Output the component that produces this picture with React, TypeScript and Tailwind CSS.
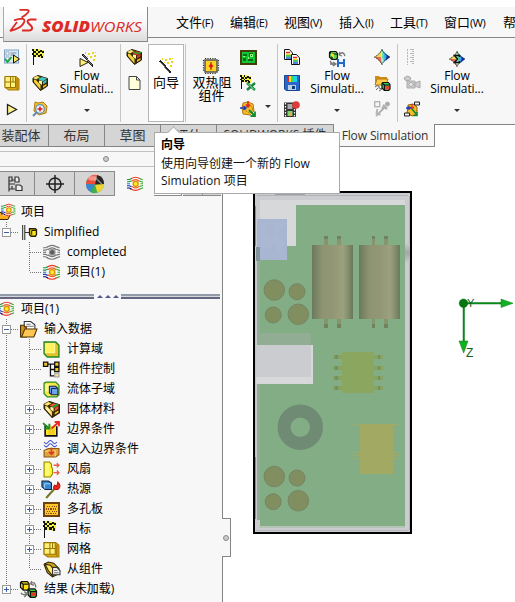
import React from "react";

const FONT = "font-['Open_Sans','Noto_Sans_CJK_SC',sans-serif]";

type IconName =
  | "list" | "mesh" | "play" | "flag" | "brick" | "search" | "wandPlay" | "burger" | "doc" | "wand"
  | "chip" | "pcb" | "excel" | "gear" | "copy" | "save" | "film" | "load" | "diamond" | "folderCube"
  | "probe" | "ruler" | "camera" | "rotate" | "sigma" | "eye" | "eyeGray" | "eyeFolder" | "config"
  | "folder" | "cube" | "tree" | "sub" | "solid" | "boundary" | "transfer" | "fan" | "heat" | "porous"
  | "part" | "results" | "treeTab" | "target" | "ball";

function Eye({ gray = false }: { gray?: boolean }) {
  const pick = (c: string) => (gray ? "#777" : c);
  return (
    <g fill="none" strokeWidth="1.100">
      <path d="M4 2.800Q8.800-.3 13 2.800M3.500 12.700Q8.800 16 13 12.700" stroke={pick("#ee3423")} />
      <path d="M4.500 5.400Q8.800 1.700 12.500 5.400M4.500 10.100Q8.800 13.700 12.500 10.100" stroke={pick("#ee5a23")} />
      <path d="M0 3.500h2.500l2-1M0 5.800h2.500l2-1" stroke={pick("#189a3a")} />
      <path d="M0 7.800h3" stroke={pick("#1d8fd0")} />
      <path d="M0 9.800h2.500l2 1" stroke={pick("#1a35c8")} />
      <path d="M0 12h2.500l2 1.200" stroke={pick("#101070")} />
      <path d="M12.700 2.500l3 1.300M12.500 5l3.500 1.200M13.500 7.800h2.500M12.500 10.500l3.500-1M12.700 13.200l3.300-1.500" stroke={pick("#35ad32")} />
      <circle cx="8.700" cy="7.800" r="2.500" fill={gray ? "#5c5c5c" : "#fff020"} stroke={gray ? "#8d8d8d" : "#d98f12"} strokeWidth="1.300" />
    </g>
  );
}

function Flag({ s = 1 }: { s?: number }) {
  const dark: [number, number][] = [[0, 0], [4, 0], [8, 1], [2, 2], [6, 2], [10, 2], [0, 4], [4, 4], [8, 5], [2, 6], [6, 6], [9, 7]];
  return (
    <g transform={`scale(${s})`} shapeRendering="crispEdges">
      <path d="M1 0h5l3 1h3v8h-4l-3-1H1z" fill="#f4f044" />
      {dark.map(([x, y], i) => <rect key={i} x={x} y={y} width="2" height="2" fill="#151505" />)}
      <path d="M1.500 0v16" stroke="#111" strokeWidth="1.400" />
    </g>
  );
}

function Brick({ fill }: { fill: string }) {
  return (
    <g strokeLinejoin="round">
      <path d="M1 3l5-2.500 9.500 3V11L8.500 15.500 1 7z" fill="#372706" stroke="#2a1d04" />
      <path d="M1 3l4-2 3 1-4 2.500z" fill="#ffea70" />
      <path d="M2 4.500l2.500 1 4 4.500v4.500L2 7z" fill="#f3d43c" />
      <path d="M6 4l4-2 5 1.500-4 3z" fill={fill} />
      <path d="M7 5.500l3 .5v4l-3-2z" fill="#fff2a0" />
      <path d="M11 7l3.500-2.300v2.500L11 9.600z" fill={fill} />
      <path d="M11 11l3.500-2v1.800L11 13z" fill="#f3c22a" />
    </g>
  );
}

function MiniCube({ x, y, c }: { x: number; y: number; c: string }) {
  return (
    <g transform={`translate(${x} ${y})`} stroke="#111" strokeWidth="1.200" strokeLinejoin="round">
      <path d="M.5 1.500l1-1H7l1.500 2V7l-1.500 1.500H3L.5 6z" fill={c} />
      <path d="M3 3h5M3 3v5M3 3L.8 1.200" fill="none" />
    </g>
  );
}

function Wand() {
  return (
    <g shapeRendering="crispEdges">
      <path d="M1 3.500l2-1.500L13 14l-1 1.500z" fill="#222" />
      <path d="M2.500 3.500l9 10" stroke="#999" strokeWidth=".8" />
      <path d="M7 1h2v2H7zM11 0h2v2h-2zM4 0h1v2H4zM9 4h2v2H9zM13 3h2v2h-2zM12 7h2v2h-2zM6 4h1v1H6zM14 0h1v1h-1z" fill="#e6d51c" />
    </g>
  );
}

function Rainbow() {
  return (
    <g>
      <path d="M8 0L16 8 8 16 0 8z" fill="#fff" />
      <path d="M8 0Q6 5 0 8l7 .5z" fill="#f0dd4a" />
      <path d="M0 8q5 2 8 8l-.5-8z" fill="#f0695a" />
      <path d="M8 0q-2 8 0 16 4-6 3-11z" fill="#aef2d2" />
      <path d="M8 0q1 6 0 8l2 5q4-7 1-9z" fill="#57d7a5" />
      <path d="M10 3l6 5-6 5q1-5 0-10z" fill="#3aa6ee" />
      <path d="M12.500 5.500L16 8l-4 3.500z" fill="#1e32c8" />
      <path d="M8 .5Q10 5 15.500 8 10 11 8 15.500 6 11 .5 8 6 5 8 .5z" fill="none" stroke="#222" strokeWidth=".9" strokeDasharray="2 .6" />
    </g>
  );
}

function Folder() {
  return (
    <g strokeLinejoin="round">
      <path d="M1 5h4l1 1.500h7V15H1z" fill="#b97810" stroke="#4b3205" />
      <path d="M3 15l3-7h10l-3 7z" fill="#ffc334" stroke="#513705" />
    </g>
  );
}

function drawing(name: IconName) {
  switch (name) {
    case "list":
      return <g><rect x=".5" y="1" width="14" height="13" fill="#dceaf6" stroke="#7fa2c4" /><path d="M2 3h3v3H2zM2 8h3v3H2z" fill="#fff" stroke="#7894ae" strokeWidth=".7" /><path d="M6.500 4h6M6.500 6h4" stroke="#6b8aa8" /><path d="M1 10l2.500 3 4-5" stroke="#1ba63c" strokeWidth="1.800" fill="none" /><path d="M9.500 6l6 4-6 4z" fill="#ffe65c" stroke="#111" /></g>;
    case "mesh":
      return <g><path d="M1 1.500h11l3 2.500v11H4.500L1 12.500z" fill="#d9a616" stroke="#a57c08" /><path d="M1 1.500h10.500v11H1z" fill="#fff07e" stroke="#9b7600" /><path d="M6.500 1.500v11M1 7h10.500M9 1.500v5.500M13 3.500v11" stroke="#9b7600" fill="none" /></g>;
    case "play":
      return <path d="M3.500 3.500l9 5-9 5z" fill="#fff387" stroke="#222" strokeWidth="1.300" />;
    case "flag": return <Flag />;
    case "brick": return <Brick fill="#3bc6c4" />;
    case "burger": return <g><Brick fill="#e03520" /><path d="M7 3l5 1.500 3-1" stroke="#29a02b" strokeWidth="1.500" fill="none" /></g>;
    case "solid": return <g><Brick fill="#ee5135" /><path d="M3 5l3 3 2 5-5-5z" fill="#fff1c3" /><path d="M9 6l5-3" stroke="#1ea234" strokeWidth="1.800" /></g>;
    case "search":
      return <g><path d="M3 1l3 1 5-1 4 4-1 7-7 2-5-4z" fill="#f0c131" stroke="#b57c14" /><circle cx="8" cy="8" r="4.300" fill="#edf6ff" stroke="#6493b9" strokeWidth="1.300" /><path d="M5 11L1 15" stroke="#5f88b0" strokeWidth="2" /><path d="M8 5.500v5M5.500 8h5" stroke="#e01818" strokeWidth="1.500" /></g>;
    case "wandPlay":
      return <g><g transform="translate(1.500 .5)"><Wand /></g><path d="M1 7.500l8 4-8 4z" fill="#fff16b" stroke="#222" /></g>;
    case "wand": return <Wand />;
    case "doc": return <path d="M3 1.500h7.500L14 5v9.500H3zM10.500 1.500V5H14" fill="#ffffdc" stroke="#444" />;
    case "chip":
      return <g><rect x="2" y="2" width="12" height="12" fill="#ffd424" stroke="#555" strokeWidth="1.500" /><path d="M.5 2v12M15.500 2v12M2 .5h12M2 15.500h12" stroke="#333" strokeWidth="1.200" strokeDasharray="1.200 1.200" /><path d="M8 4v8" stroke="#7a1a10" /><path d="M8 5.500L10.500 8 8 10.500 5.500 8z" fill="#e01e12" /></g>;
    case "pcb":
      return <g shapeRendering="crispEdges"><rect x=".5" y="1.500" width="15" height="13" fill="#13c634" stroke="#493c0c" strokeWidth="2" /><path d="M3 5h4v2H3zM9 4h4v4H9zM3 9h3v3H3zM8 10h5v2H8z" fill="#0a6c1b" /><path d="M10 5h2v2h-2zM8 8v2M3 7h2" stroke="#8ffb77" fill="none" /></g>;
    case "excel":
      return <g><Flag s={.9} /><path d="M7 8l8 7M15 8l-8 7" stroke="#188741" strokeWidth="2.400" /><path d="M8 8.500l6 6" stroke="#9cdea6" strokeWidth="1" /></g>;
    case "gear":
      return <g><path d="M3 2l5-1 5 2 1 7-4 4-7-1-1-6z" fill="#f4be27" stroke="#b57914" /><circle cx="9" cy="8" r="3.500" fill="none" stroke="#aa7115" strokeDasharray="1.500 1" /><path d="M8 0v6M6 3.500L8 6l2-2.500" stroke="#e32424" strokeWidth="1.600" fill="none" /><path d="M0 7h5M3.500 5l2.500 2-2.500 2" stroke="#1638bd" strokeWidth="1.400" fill="none" /><path d="M9 9l5.500 5.500M10.500 15H15v-4.500" stroke="#138b31" strokeWidth="1.800" fill="none" /></g>;
    case "rotate":
      return <g><path d="M4 4l5-1 4 3v6l-4 3-6-2z" fill="#f4be27" stroke="#925f0b" /><path d="M8 3v5M6 6l2 2 2-2" stroke="#e32424" strokeWidth="1.300" fill="none" /><path d="M2 7h5M5 5v4" stroke="#1638bd" strokeWidth="1.300" /><path d="M8 8l5 6M9.500 14.500H13V11" stroke="#138b31" strokeWidth="1.600" fill="none" /><path d="M10.500 1h5v3h-5zM.5 12h5v3h-5z" fill="#eee" stroke="#222" /></g>;
    case "copy":
      return <g>{[[0, 0], [7, 5]].map(([x, y], i) => <g key={i} transform={`translate(${x} ${y})`}><path d="M.5.5h5L8.500 4v6.500h-8z" fill="#fff" stroke="#111" /><path d="M2 3.500h4" stroke="#e5261f" strokeWidth="1.500" /><path d="M2 5.500h5" stroke="#efd920" strokeWidth="1.500" /><path d="M2 7h5" stroke="#17b944" strokeWidth="1.500" /><path d="M2 9h5" stroke="#185be0" strokeWidth="1.500" /></g>)}</g>;
    case "save":
      return <g><path d="M.5.5h15v15H2L.5 14z" fill="#2967cb" stroke="#17468e" /><path d="M3 1h2v6H3z" fill="#ed2020" /><path d="M5 1h2v6H5z" fill="#ffe824" /><path d="M7 1h3v6H7z" fill="#31df63" /><path d="M10 1h3v6h-3z" fill="#20cfe8" /><rect x="4" y="10" width="8" height="5" fill="#b9cfe8" /><path d="M8 11h3v3H8z" fill="#153a78" /></g>;
    case "film":
      return <g><path d="M0 1.500h12V16H0z" fill="#333" /><path d="M3.500 3h5v5h-5z" fill="#aaa" /><path d="M3.500 10h5v5h-5z" fill="#7bd475" /><path d="M1.500 2v14M10.500 2v14" stroke="#fff" strokeWidth="1.200" strokeDasharray="1.500 1.500" /><circle cx="12" cy="4" r="3.800" fill="#dd3c38" /><path d="M5 13l3-2v4H5z" fill="#f8a840" /></g>;
    case "load":
      return <g><MiniCube x={0} y={0} c="#5ad24f" /><path d="M2 2l3 1v4l-3-2z" fill="#f8dd27" /><path d="M10 4q4-5 6 1M10 4l1-3M10 4l3 1M1 10l3 4M1 13h5M4 11l3 2-3 2" stroke="#777" strokeWidth="1.300" fill="none" /><path d="M8 8h8v8H8z" fill="#236ac7" /><path d="M10 8h4v3h-4zM10 13h4v3h-4z" fill="#edf4ff" /></g>;
    case "diamond": return <Rainbow />;
    case "sigma": return <g><Rainbow /><path d="M10.500 6V4.500h-5L8.500 8l-3 3.500h5V10" stroke="#111" strokeWidth="1.500" fill="none" /></g>;
    case "folderCube":
      return <g><path d="M1 1h4l1 1h7v8H1z" fill="#d18d14" /><path d="M1 10l2-6h11l-2 6z" fill="#ffcb4d" stroke="#b47a13" /><path d="M1 12q2-2 4-1v2l3 1-3 2M2 15l2-2" stroke="#666" fill="none" /><MiniCube x={7.5} y={7} c="#35c95a" /><path d="M11.500 11h3.500v3.500h-3.500z" fill="#e44430" /></g>;
    case "probe":
      return <g fill="none" stroke="#b0b0b0"><rect x=".7" y=".7" width="5" height="5" strokeWidth="1.300" /><path d="M2 15l8-8M3.500 8l-1 4 4 2" strokeWidth="1.800" /><path d="M9 4l4 4M8 8l3-3" strokeWidth="2.500" /><circle cx="13.500" cy="3" r="2" fill="#aaa" /></g>;
    case "ruler":
      return <g stroke="#b8b8b8"><path d="M3.500 0v16" strokeDasharray="2 1" /><path d="M6 .5h4M8 2.500h2M6 4.500h4M8 6.500h2M6 8.500h4M8 10.500h2M6 12.500h4M8 14.500h2" /></g>;
    case "camera":
      return <g fill="#ccc" stroke="#aaa"><path d="M0 3l3-2 3 1 1 2-3 2-3-1zM3 6h8v7H3z" /><path d="M11 8l5-2v7l-5-2z" /><circle cx="7" cy="9.500" r="2" fill="#eee" /></g>;
    case "eye": return <Eye />;
    case "eyeGray": return <Eye gray />;
    case "eyeFolder": return <g><path d="M-1 8l3 1h9l-3 6.500H-1z" fill="#f7ad1e" stroke="#3d2605" /><g transform="translate(1 -1) scale(.9)"><path d="M2 2h12v12H2z" fill="#f7f7f7" opacity=".8" /><Eye /></g></g>;
    case "config": return <g><path d="M2.500 1v14M4.500 1v14M5 8h4M9 5v5" stroke="#333" /><path d="M9 4.500h5.500l1 1V10l-1 1.500h-4L9 10z" fill="#ffe51e" stroke="#282006" strokeWidth="1.300" /><path d="M11 6h4M11 6v4" stroke="#282006" /></g>;
    case "folder": return <g><path d="M4 .5h6l4 3v9H4z" fill="#fff" stroke="#333" /><path d="M6 3h4M6 5h7" stroke="#777" /><path d="M.5 4h3l1 1.500H6V15H.5z" fill="#d28f1a" stroke="#4b3205" /><path d="M1.500 15l3-7.500H16L13 15z" fill="#ffc653" stroke="#513705" /></g>;
    case "cube": return <g><path d="M1 1h11l3 3v11H4l-3-3z" fill="#e3c129" stroke="#228a24" strokeWidth="1.300" /><path d="M2 2h9.500v9.500H2z" fill="#fff797" /><path d="M3 3h7.500v7.500H3z" fill="#fff25f" /></g>;
    case "tree": return <g fill="#f2c62b" stroke="#111" strokeWidth="1.200"><path d="M4 3h8M7 3v11h4M7 8h4" fill="none" /><path d="M.5 1h4v4h-4zM11 1h4v4h-4zM11 6h4v4h-4z" /><path d="M11 11.500h4v3.500h-4z" stroke="#aaa" fill="#eee197" /></g>;
    case "sub": return <g><path d="M1 2l2-1h9l3 3v9l-2 2H4l-3-3z" fill="#f7e548" stroke="#288d2c" strokeWidth="1.200" /><path d="M2 3h5v7H2z" fill="#fff783" /><path d="M6 5h6l2 2v6H8l-2-2z" fill="#6ca5ed" stroke="#13264b" /><path d="M8 7h5M8 7v5" stroke="#13264b" /></g>;
    case "boundary": return <g><path d="M2 4v10h11V5" fill="#ffe629" stroke="#111" strokeWidth="1.500" /><path d="M5 7h6v6H5z" fill="#f3d020" /><path d="M0 2l6 5M6 2.500V7H1" stroke="#218c2f" strokeWidth="1.800" fill="none" /><path d="M8 7l7-6M11 1h4v4" stroke="#e82d1f" strokeWidth="1.800" fill="none" /></g>;
    case "transfer": return <g><path d="M1 9l4-2h10v6l-3 2H1z" fill="#e0a43e" stroke="#8c5614" /><path d="M2 9.500h9.500v5" fill="none" stroke="#fbd577" /><path d="M1 1q2 3 4 0t4 0 4 0M1 4q2 3 4 0t4 0 4 0" stroke="#324bd1" fill="none" /><path d="M8 6v6M5.500 10L8 12.500l2.500-2.500" stroke="#e13821" strokeWidth="1.600" fill="none" /></g>;
    case "fan": return <g><path d="M1 1h5l2 2v3l1 1v5l-2 3H1z" fill="#fff529" stroke="#8b8700" /><path d="M2 2h4v12H2z" fill="#fff777" /><path d="M10 4h5M13 2l2 2-2 2M10 11h5M13 9l2 2-2 2" stroke="#ed5b49" strokeWidth="1.200" fill="none" /></g>;
    case "heat": return <g><path d="M-1 0h6l3 2v6H2L-1 5.500z" fill="#3887d2" stroke="#14243b" /><path d="M1.500 2.500H7M1.500 2.500V7" stroke="#9bd0f3" /><path d="M3 16l8-9" stroke="#75792b" strokeWidth="2" /><path d="M11 8q-2-2 0-4l2 1 1-4q4 4 0 7z" fill="#ee2519" stroke="#bd1410" /></g>;
    case "porous": return <g shapeRendering="crispEdges"><rect x="1" y="2" width="14" height="12" fill="#ffc52a" stroke="#71420c" strokeWidth="2" />{[4, 6, 8, 10, 12].flatMap(x => [4, 6, 8, 10].map(y => <rect key={`${x}-${y}`} x={x - (y % 4 ? 1 : 0)} y={y + 1} width="1" height="1" fill="#85510c" />))}</g>;
    case "part": return <g><path d="M1 3l4-2 5 1 5 5v5l-6 3-5-4z" fill="#d5a717" stroke="#2d2206" /><path d="M2 3l5 1 5 7-3 3-4-5z" fill="#ffea60" stroke="#332506" /><path d="M9 6h4l3 3v4H9z" fill="#eee" stroke="#333" /><path d="M10.500 9h3M10.500 11h4" stroke="#777" /></g>;
    case "results": return <g><MiniCube x={0} y={0} c="#ffe01b" /><MiniCube x={7} y={7} c="#3bd342" /><path d="M11 11h4v3h-4z" fill="#e8341e" /><path d="M10 3q4-4 5 3M10 3l1-3M10 3l3 1M1 11q1 3 6 1M4 10l3 2-3 3" stroke="#777" strokeWidth="1.300" fill="none" /></g>;
    case "treeTab": return <g fill="none" stroke="#333" strokeWidth="1.200"><path d="M2 .5v15M2 1h3v4H2M5 4h3M2 8h6M2 13h6M5 10v3" /><path d="M8 1h3l1 1.500V6H8z" fill="#eee" /><path d="M9 9h4l2 1.500v4H9z" fill="#eee" /></g>;
    case "target": return <g fill="none" stroke="#222" strokeWidth="1.500"><circle cx="8" cy="8" r="6" /><path d="M8-1v18M-1 8h18" /></g>;
    case "ball": return <g><circle cx="8" cy="8" r="8" fill="#34a24a" /><path d="M8 8.500L1 4A8 8 0 0 1 10 0z" fill="#f0604d" /><path d="M8 8.500L0 8q0-3 2-5l5-2z" fill="#ee4b3a" /><path d="M8 8.500L0 8q0 5 4 7z" fill="#3a86cf" /><path d="M8 8.500L4 15q3 2 6 .5z" fill="#3fae4d" /><path d="M8 8.500l2 7q6-1.500 6-7.500z" fill="#eed333" /><path d="M8 8.500L10 0q6 1.500 6 8z" fill="#292525" /><ellipse cx="6" cy="3" rx="4" ry="2" fill="#fff" opacity=".4" /><path d="M10 4l4 4" stroke="#999" /></g>;
  }
}

function Icon({ name, className = "size-4" }: { name: IconName; className?: string }) {
  return <svg viewBox="0 0 16 16" className={`${className} shrink-0 overflow-visible`}>{drawing(name)}</svg>;
}

const Stack = ({ names, className }: { names: IconName[]; className: string }) => (
  <div className={`flex shrink-0 flex-col gap-2.5 pt-[5px] ${className}`}>
    {names.map((n, i) => <Icon key={i} name={n} />)}
  </div>
);

const Divider = () => <div className="h-[78px] w-px shrink-0 bg-[#c5c5c5]" />;

const Caret = () => <span className="border-x-[3px] border-t-[3px] border-x-transparent border-t-[#333]" />;

function FlowButton({ icon, className }: { icon: IconName; className: string }) {
  return (
    <div className={`flex shrink-0 flex-col items-center pt-[7px] text-[12px] leading-[13px] tracking-[-0.1px] ${className}`}>
      <Icon name={icon} />
      <span className="mt-0.5">Flow</span>
      <span>Simulati...</span>
      <span className="mt-[14px] flex"><Caret /></span>
    </div>
  );
}

function Menu() {
  const items = [
    { t: "文件", k: "(F)", w: "w-[54px]" }, { t: "编辑", k: "(E)", w: "w-[54px]" }, { t: "视图", k: "(V)", w: "w-[55px]" },
    { t: "插入", k: "(I)", w: "w-[51px]" }, { t: "工具", k: "(T)", w: "w-[54px]" }, { t: "窗口", k: "(W)", w: "w-[59px]" }, { t: "帮", k: "", w: "w-[13px]" },
  ];
  return (
    <div className="mt-[7px] flex h-[31px] border-b border-[#858585] bg-[#f7f7f7]">
      <div className="relative z-10 ml-[3px] flex h-[35px] w-[145px] shrink-0 items-center border border-t-0 border-[#aaa] border-r-[#888] border-b-[#888] bg-linear-to-b from-white via-[#f8f8f8] to-[#dcdcdc]">
        <svg viewBox="4 7 143 34" className="h-[34px] w-[143px] shrink-0" fill="none">
          <g stroke="#dc2a26" strokeWidth="1.800" strokeLinejoin="round">
            <path d="M19.500 9.800h7q3.500 0 1.500 2.700-2 2.700-6.500 5" />
            <path d="M14 20.300q4.500-1.600 8-1.600 3.500.3 2 3.800-3 6-13.500 8.300L17 22" />
            <path d="M36.500 19.500h-6q-4 .5-2.500 3.300l3.500 3.500q2 3.700-2.500 4.200h-7" strokeWidth="2" />
          </g>
          <text x="42" y="31.500" textLength="48" lengthAdjust="spacingAndGlyphs" fill="#dc2a26" className="font-['Open_Sans'] text-[15px] font-extrabold italic">SOLID</text>
          <text x="90" y="31.500" textLength="52" lengthAdjust="spacingAndGlyphs" fill="#dc2a26" className="font-['Open_Sans'] text-[15px] italic">WORKS</text>
        </svg>
      </div>
      <div className="ml-[28px] flex pt-[7px] leading-4">
        {items.map(i => <div key={i.t} className={`shrink-0 whitespace-nowrap text-[13px] ${i.w}`}>{i.t}{i.k && <span className="text-[11px] tracking-[-0.4px]">{i.k}</span>}</div>)}
      </div>
    </div>
  );
}

function Ribbon() {
  return (
    <div className="flex h-[86px] overflow-hidden bg-[#f7f7f7] pt-1.5">
      <Stack names={["list", "mesh", "play"]} className="w-[26px] pl-1" />
      <Divider />
      <Stack names={["flag", "brick", "search"]} className="w-[27px] pl-[5px]" />
      <FlowButton icon="wandPlay" className="w-[66px] pr-px" />
      <Divider />
      <Stack names={["burger", "doc"]} className="w-[27px] pl-[5px]" />
      <div className="mr-px flex h-[78px] w-9 shrink-0 flex-col items-center border border-[#b6b6b6] bg-white pt-[13px] text-[13px] leading-[17px]">
        <Icon name="wand" /><span>向导</span>
      </div>
      <Divider />
      <div className="flex w-[54px] shrink-0 flex-col items-center pt-[14px] pr-[5px] text-[13px] leading-[13px]">
        <Icon name="chip" /><span className="mt-0.5 ml-[3px] whitespace-nowrap">双热阻</span><span className="ml-0.5">组件</span>
      </div>
      <Stack names={["pcb", "excel", "gear"]} className="w-[25px]" />
      <div className="w-[12px] shrink-0 pt-[63px]"><Caret /></div>
      <Divider />
      <Stack names={["copy", "save", "film"]} className="w-[30px] pl-1.5" />
      <FlowButton icon="load" className="w-[58px]" />
      <Stack names={["diamond", "folderCube", "probe"]} className="w-[31px] pl-2" />
      <Divider />
      <Stack names={["ruler", "camera", "rotate"]} className="w-[29px] pl-1.5" />
      <FlowButton icon="sigma" className="w-[60px]" />
    </div>
  );
}

function CommandTabs() {
  const tab = "shrink-0 border-r border-y border-[#858585] bg-[#d5d5d5] text-center leading-[20px] whitespace-nowrap overflow-hidden h-[23px]";
  return (
    <div className="flex h-[23px] text-[13px] text-[#333]">
      <div className={`${tab} w-[49px] pr-1.5`}>装配体</div>
      <div className={`${tab} w-14`}>布局</div>
      <div className={`${tab} w-14`}>草图</div>
      <div className={`${tab} w-14`}>评估</div>
      <div className={`${tab} w-[117px] text-[12px]`}>SOLIDWORKS 插件</div>
      <div className="w-[101px] shrink-0 border-r border-b border-[#858585] bg-[#f7f7f7] pl-[2px] text-center text-[12px] leading-[23px] tracking-[-0.12px]">Flow Simulation</div>
      <div className="grow border-t border-[#858585]" />
    </div>
  );
}

type Row = { label: string; icon: IconName; level: number; box?: "+" | "-"; last?: boolean; outer?: boolean };

function Gutter({ box, last }: { box?: "+" | "-"; last?: boolean }) {
  return (
    <svg viewBox="0 0 20 20" className="h-5 w-5 shrink-0" shapeRendering="crispEdges">
      <path d={`M6.500 0V${last ? 10 : 20}M6.500 10.500H19`} stroke="#777" strokeDasharray="1 1" fill="none" />
      {box && <g><rect x="2.500" y="6.500" width="8" height="8" fill="#fff" stroke="#999" /><path d={box === "+" ? "M4 10.500h5M6.500 8v5" : "M4 10.500h5"} stroke="#3c5fa5" /></g>}
    </svg>
  );
}

function TreeRow({ row }: { row: Row }) {
  if (row.level === 0)
    return <div className="flex h-5 items-center"><Icon name={row.icon} className={row.icon === "eye" ? "-ml-0.5 mr-[7px] size-4" : "mr-[5px] size-4"} />{row.label}</div>;
  return (
    <div className="flex h-5 items-center whitespace-nowrap">
      {row.level === 2 && (
        <svg viewBox="0 0 23 20" className="h-5 w-[23px] shrink-0" shapeRendering="crispEdges">{row.outer && <path d="M6.500 0v20" stroke="#777" strokeDasharray="1 1" />}</svg>
      )}
      <Gutter box={row.box} last={row.last} />
      <Icon name={row.icon} className="mr-[7px] size-[17px]" />
      {row.label}
    </div>
  );
}

const projectRows: Row[] = [
  { label: "项目", icon: "eyeFolder", level: 0 },
  { label: "Simplified", icon: "config", level: 1, box: "-", last: true },
  { label: "completed", icon: "eyeGray", level: 2 },
  { label: "项目(1)", icon: "eye", level: 2, last: true },
];

const studyRows: Row[] = [
  { label: "项目(1)", icon: "eye", level: 0 },
  { label: "输入数据", icon: "folder", level: 1, box: "-" },
  { label: "计算域", icon: "cube", level: 2, outer: true },
  { label: "组件控制", icon: "tree", level: 2, outer: true },
  { label: "流体子域", icon: "sub", level: 2, outer: true },
  { label: "固体材料", icon: "solid", level: 2, outer: true, box: "+" },
  { label: "边界条件", icon: "boundary", level: 2, outer: true, box: "+" },
  { label: "调入边界条件", icon: "transfer", level: 2, outer: true },
  { label: "风扇", icon: "fan", level: 2, outer: true, box: "+" },
  { label: "热源", icon: "heat", level: 2, outer: true, box: "+" },
  { label: "多孔板", icon: "porous", level: 2, outer: true, box: "+" },
  { label: "目标", icon: "flag", level: 2, outer: true, box: "+" },
  { label: "网格", icon: "mesh", level: 2, outer: true, box: "+" },
  { label: "从组件", icon: "part", level: 2, outer: true, last: true },
  { label: "结果 (未加载)", icon: "results", level: 1, box: "+", last: true },
];

function SidePanel() {
  const tab = "flex h-[25px] shrink-0 items-center justify-center border-y border-r border-[#8a8a8a] bg-[#d5d5d5]";
  return (
    <aside className="relative flex w-[223px] shrink-0 flex-col border-r border-[#858585] bg-[#f7f7f7] text-[12px]">
      <div className="mt-[4px] flex h-[16px] items-center justify-center border-y border-[#c2c2c2] pr-[10px]">
        <span className="size-1.5 rounded-full border border-[#888] bg-[#ccc]" />
      </div>
      <div className="mt-[4px] flex">
        <div className={`${tab} w-[35px] pr-1`}><Icon name="treeTab" className="h-[18px] w-4" /></div>
        <div className={`${tab} w-10`}><Icon name="target" /></div>
        <div className={`${tab} w-10`}><Icon name="ball" className="size-[18px]" /></div>
        <div className="flex h-[25px] w-[39px] items-center justify-center"><Icon name="eye" /></div>
        <div className={`${tab} w-[28px] bg-white`} />
        <div className={`${tab} ml-px w-5`} />
        <div className={`${tab} w-[18px] border-r-0`} />
      </div>
      <div className="mt-[6px]">{projectRows.map((r, i) => <TreeRow key={i} row={r} />)}</div>
      <div className="mt-[12px] mr-0.5 flex h-[5px] items-center">
        <span className="h-[5px] w-[94px] border-t-2 border-b-2 border-t-[#929aa8] border-b-[#666680] bg-[#d4d7dd]" />
        <span className="flex w-[27px] justify-center gap-0.5">
          {[0, 1, 2].map(i => <span key={i} className="border-x-[3px] border-b-[3px] border-x-transparent border-b-[#55558b]" />)}
        </span>
        <span className="h-[5px] grow border-t-2 border-b-2 border-t-[#929aa8] border-b-[#666680] bg-[#d4d7dd]" />
      </div>
      <div>{studyRows.map((r, i) => <TreeRow key={i} row={r} />)}</div>
      <div className="absolute top-[371px] left-[222px] flex h-[39px] w-[9px] items-center justify-center border border-l-0 border-[#858585] bg-[#f7f7f7]">
        <span className="size-1.5 rounded-full border border-[#888] bg-[#ccc]" />
      </div>
    </aside>
  );
}

function Model() {
  const caps: [number, number, number][] = [[274.3, 290, 10.3], [297, 291.7, 8], [273.2, 315, 8], [298.3, 314.3, 10.3], [274.3, 476.5, 10.3], [297, 478, 8], [273.2, 501.7, 8], [298.3, 500.7, 10.3]];
  return (
    <svg viewBox="223 147 292 455" className="h-[455px] w-[292px]">
      <defs>
        <linearGradient id="barrel">
          <stop offset="0" stopColor="#6a795b" /><stop offset=".25" stopColor="#8e9472" /><stop offset=".5" stopColor="#929674" />
          <stop offset=".76" stopColor="#9ba07e" /><stop offset=".84" stopColor="#8e9473" /><stop offset="1" stopColor="#687a5a" />
        </linearGradient>
        <linearGradient id="notch" x2="0" y2="1">
          <stop offset="0" stopColor="#c4c7ca" /><stop offset=".5" stopColor="#a3a6ab" /><stop offset="1" stopColor="#c4c7ca" />
        </linearGradient>
      </defs>
      <g shapeRendering="crispEdges">
        <rect x="254" y="192" width="157" height="341" fill="#cacccf" stroke="#000" strokeWidth="2" />
        <path d="M257 195.500h151M409.500 196v334" stroke="#b0b2b5" />
        <rect x="275" y="193" width="30" height="2" fill="#9ea2aa" />
        <rect x="260" y="200" width="145" height="50" fill="#d6d8da" />
        <path d="M296 205h109v321H260V246h36z" fill="#82ad85" />
        <path d="M257 246h3v274h-3z" fill="#92ad96" />
        <path d="M255.500 263v194" stroke="#c9c98d" />
        <path d="M255.500 206v40M255.500 457v62" stroke="#8a8b91" />
        <path d="M259 526h146v2H259z" fill="#b4c5b7" />
        <path d="M256 530.500h153" stroke="#b6b8ba" />
        <rect x="257" y="219" width="30" height="41" fill="#a9b6d1" />
        <path d="M260 223l8 3-3 7 8 9-5 8-8-4zM274 221l11 4-8 8 7 10-3 12-9-14z" fill="#adb9d6" opacity=".6" />
        <rect x="256" y="247" width="4" height="14" fill="#84939b" />
        <rect x="405" y="244" width="5" height="18" fill="url(#notch)" />
        {[[324, 4], [337, 4], [372, 3], [384, 4]].map(([x, w]) => <g key={x} fill="#87946c"><rect x={x} y="236" width={w} height="92" /><path d={`M${x} 236h${w}v3h-${w}zM${x} 324h${w}v4h-${w}z`} fill="#708260" /></g>)}
        <rect x="312" y="245" width="41" height="74" fill="url(#barrel)" />
        <rect x="359" y="245" width="41" height="74" fill="url(#barrel)" />
        <rect x="257" y="333" width="54" height="12" fill="#91ae95" />
        <rect x="256" y="345" width="57" height="39" fill="#d6d8da" />
        <rect x="256" y="345" width="55" height="32" fill="#cacccf" />
        {[355, 366, 376, 386].map(y => <g key={y}><path d={`M333 ${y}h50v4h-50z`} fill="#86a363" /><path d={`M335 ${y}h3v4h-3zM378 ${y}h2v4h-2z`} fill="#72905c" /></g>)}
        <rect x="342" y="352" width="32" height="41" fill="#8aa65f" />
        <rect x="360" y="424" width="33" height="50" fill="#a1a963" />
        <path d="M354 424.500h46M354 452.500h6M393 452.500h7M354 455.500h6M393 455.500h7M354 458.500h6M393 458.500h7" stroke="#a1a963" />
      </g>
      {caps.map(([x, y, r], i) => <circle key={i} cx={x} cy={y} r={r} fill="#818e60" stroke="#728061" strokeWidth=".8" />)}
      <circle cx="300.300" cy="427.300" r="16.200" fill="none" stroke="#708b73" strokeWidth="13" />
      <g stroke="#087918" strokeWidth=".5">
        <path d="M463 302.500h38v1.500h-38zM463 303v38h1.500v-38z" fill="#079016" />
        <circle cx="463.500" cy="303.200" r="4.300" fill="#067512" />
        <path d="M501 299l12 4.300-12 4.200zM459 341h9l-4.300 12z" fill="#0fb322" />
      </g>
      <text x="467" y="307" className="font-['Liberation_Sans'] text-[11px]" fill="#165e1b">Y</text>
      <text x="466" y="357" className="font-['Liberation_Sans'] text-[12px]" fill="#165e1b">Z</text>
    </svg>
  );
}

function Tooltip() {
  return (
    <div className="absolute top-[132px] left-[154px] z-20 h-[62px] w-[186px] border border-[#aaa] bg-white pl-1.5 text-[12px] text-[#111]">
      <span className="absolute -top-[5px] left-[14px] size-[9px] rotate-45 border-t border-l border-[#aaa] bg-white" />
      <div className="relative pt-[2px] leading-[19px] font-bold text-black">向导</div>
      <div className="pt-px leading-[17px] whitespace-nowrap">使用向导创建一个新的 Flow<br />Simulation 项目</div>
    </div>
  );
}

export default function App() {
  return (
    <div className={`relative flex h-[602px] w-[515px] flex-col overflow-hidden bg-white text-black ${FONT}`}>
      <Menu />
      <Ribbon />
      <CommandTabs />
      <main className="flex h-[455px] shrink-0">
        <SidePanel />
        <Model />
      </main>
      <Tooltip />
    </div>
  );
}
